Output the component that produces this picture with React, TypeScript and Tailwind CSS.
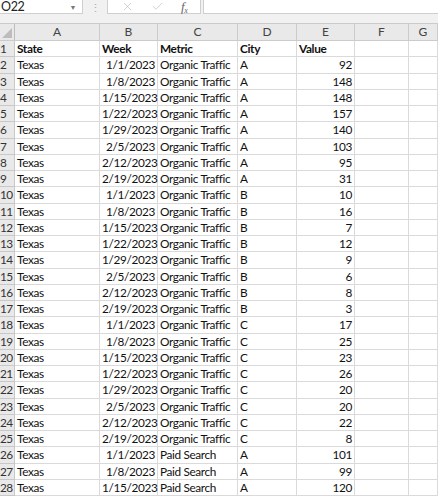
import { X, Check } from "lucide-react";

const rows: [string, string, string, string, number][] = [
  ["Texas", "1/1/2023", "Organic Traffic", "A", 92],
  ["Texas", "1/8/2023", "Organic Traffic", "A", 148],
  ["Texas", "1/15/2023", "Organic Traffic", "A", 148],
  ["Texas", "1/22/2023", "Organic Traffic", "A", 157],
  ["Texas", "1/29/2023", "Organic Traffic", "A", 140],
  ["Texas", "2/5/2023", "Organic Traffic", "A", 103],
  ["Texas", "2/12/2023", "Organic Traffic", "A", 95],
  ["Texas", "2/19/2023", "Organic Traffic", "A", 31],
  ["Texas", "1/1/2023", "Organic Traffic", "B", 10],
  ["Texas", "1/8/2023", "Organic Traffic", "B", 16],
  ["Texas", "1/15/2023", "Organic Traffic", "B", 7],
  ["Texas", "1/22/2023", "Organic Traffic", "B", 12],
  ["Texas", "1/29/2023", "Organic Traffic", "B", 9],
  ["Texas", "2/5/2023", "Organic Traffic", "B", 6],
  ["Texas", "2/12/2023", "Organic Traffic", "B", 8],
  ["Texas", "2/19/2023", "Organic Traffic", "B", 3],
  ["Texas", "1/1/2023", "Organic Traffic", "C", 17],
  ["Texas", "1/8/2023", "Organic Traffic", "C", 25],
  ["Texas", "1/15/2023", "Organic Traffic", "C", 23],
  ["Texas", "1/22/2023", "Organic Traffic", "C", 26],
  ["Texas", "1/29/2023", "Organic Traffic", "C", 20],
  ["Texas", "2/5/2023", "Organic Traffic", "C", 20],
  ["Texas", "2/12/2023", "Organic Traffic", "C", 22],
  ["Texas", "2/19/2023", "Organic Traffic", "C", 8],
  ["Texas", "1/1/2023", "Paid Search", "A", 101],
  ["Texas", "1/8/2023", "Paid Search", "A", 99],
  ["Texas", "1/15/2023", "Paid Search", "A", 120],
];

const cols = ["A", "B", "C", "D", "E", "F", "G"];
const grid = "grid grid-cols-[15px_85px_58px_80px_59px_58px_54px_1fr]";
const cell = "h-[16.26px] border-r border-b border-[#dadada] whitespace-nowrap px-[2px] leading-[16px]";
const rowHead = "h-[16.26px] border-r border-b border-[#c8c8c8] bg-[#e9e9e9] whitespace-nowrap leading-[16px] text-[#333] tracking-[-0.6px] overflow-visible z-10";

const App = () => {
  return (
    <div className="w-[438px] h-[499px] overflow-hidden bg-white text-[#111] font-['Lato',sans-serif] text-[11.8px] tracking-[-0.35px]">
      {/* formula bar */}
      <div className="h-[23px] bg-[#f1f1f1] flex items-start">
        <div className="w-[83px] h-[14px] bg-white border-b border-r border-[#cfcfcf] flex items-center justify-between pl-[1px] pr-[6px] text-[12.5px] leading-[14px] text-[#222]">
          <span>O22</span>
          <span className="text-[7px] text-[#777]">▼</span>
        </div>
        <div className="w-[24px] h-[14px] flex items-center justify-center text-[#aaa] text-[11px] leading-none">⋮</div>
        <div className="w-[94px] h-[14px] bg-white border-b border-x border-[#cfcfcf] flex items-center justify-around text-[#b5b5b5] px-[4px]">
          <X size={13} strokeWidth={1.1} />
          <Check size={13} strokeWidth={1.1} />
          <span className="font-['Liberation_Serif',serif] italic text-[13px] text-[#666] leading-none">
            f<sub className="text-[8px]">x</sub>
          </span>
        </div>
        <div className="flex-1 ml-[2px] h-[14px] bg-white border-b border-l border-[#cfcfcf]" />
      </div>

      {/* column headers */}
      <div className={`${grid} h-[18px] bg-[#e9e9e9] border-y border-[#cbcbcb] text-[#444] text-[12px] leading-[16px] tracking-normal`}>
        <div className="border-r border-[#bdbdbd] relative">
          <div className="absolute right-[2px] bottom-[2px] w-0 h-0 border-l-[10px] border-l-transparent border-b-[10px] border-b-[#bdbdbd]" />
        </div>
        {cols.map((c) => (
          <div key={c} className="border-r border-[#cbcbcb] text-center">
            {c}
          </div>
        ))}
      </div>

      {/* header row */}
      <div className={grid}>
        <div className={rowHead}>1</div>
        <div className={`${cell} font-bold`}>State</div>
        <div className={`${cell} font-bold`}>Week</div>
        <div className={`${cell} font-bold`}>Metric</div>
        <div className={`${cell} font-bold`}>City</div>
        <div className={`${cell} font-bold`}>Value</div>
        <div className={cell} />
        <div className={cell} />
      </div>

      {rows.map((r, i) => (
        <div key={i} className={grid}>
          <div className={rowHead}>{i + 2}</div>
          <div className={cell}>{r[0]}</div>
          <div className={`${cell} text-right`}>{r[1]}</div>
          <div className={cell}>{r[2]}</div>
          <div className={cell}>{r[3]}</div>
          <div className={`${cell} text-right`}>{r[4]}</div>
          <div className={cell} />
          <div className={cell} />
        </div>
      ))}
    </div>
  );
};

export default App;
